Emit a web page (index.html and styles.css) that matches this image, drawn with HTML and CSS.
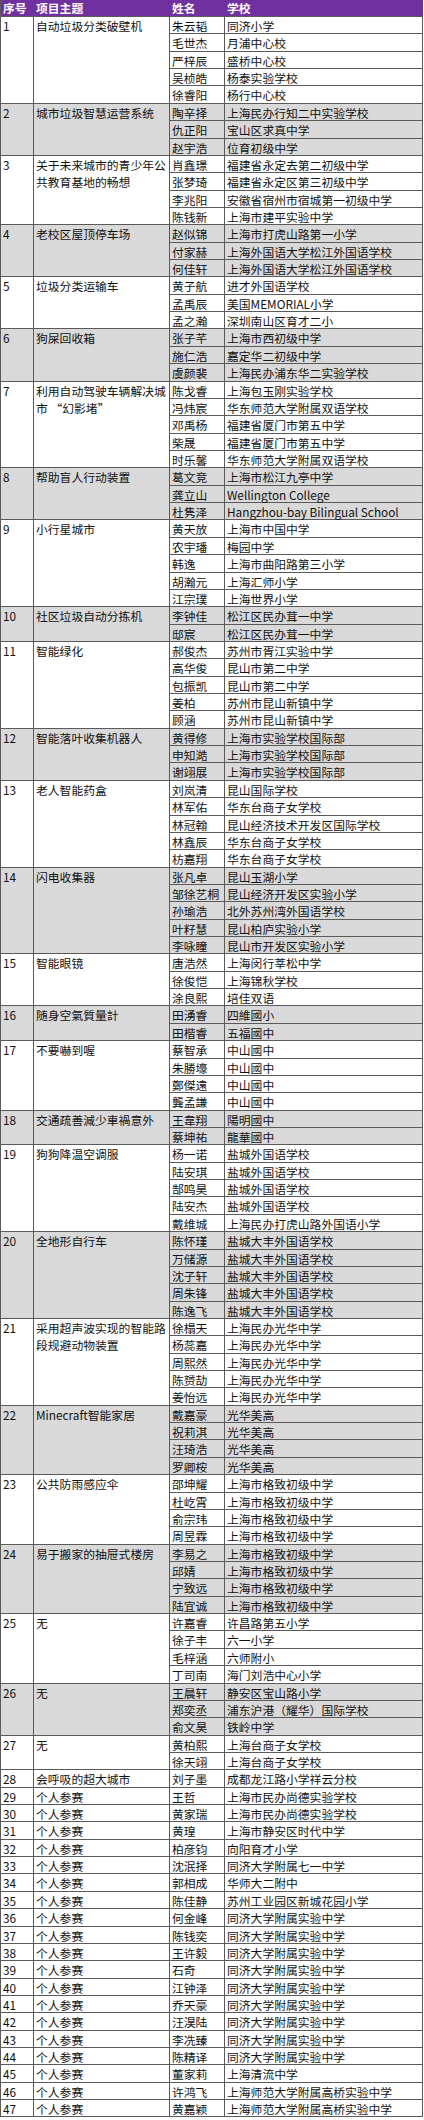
FILE: index.html
```html
<!DOCTYPE html>
<html lang="zh-CN">
<head>
<meta charset="utf-8">
<title>名单</title>
<link rel="stylesheet" href="styles.css">
</head>
<body>
<div class="t">
<div class="hd">序号</div><div class="hd">项目主题</div><div class="hd">姓名</div><div class="hd">学校</div>

<div class="grp">
<div class="no s5">1</div><div class="tp s5">自动垃圾分类破壁机</div>
<div>朱云韬</div><div>同济小学</div>
<div>毛世杰</div><div>月浦中心校</div>
<div>严梓辰</div><div>盛桥中心校</div>
<div>吴桢皓</div><div>杨泰实验学校</div>
<div>徐睿阳</div><div>杨行中心校</div>
</div>

<div class="grp g">
<div class="no s3">2</div><div class="tp s3">城市垃圾智慧运营系统</div>
<div>陶辛择</div><div>上海民办行知二中实验学校</div>
<div>仇正阳</div><div>宝山区求真中学</div>
<div>赵宇浩</div><div>位育初级中学</div>
</div>

<div class="grp">
<div class="no s4">3</div><div class="tp s4">关于未来城市的青少年公<br>共教育基地的畅想</div>
<div>肖鑫璟</div><div>福建省永定去第二初级中学</div>
<div>张梦琦</div><div>福建省永定区第三初级中学</div>
<div>李兆阳</div><div>安徽省宿州市宿城第一初级中学</div>
<div>陈钱新</div><div>上海市建平实验中学</div>
</div>

<div class="grp g">
<div class="no s3">4</div><div class="tp s3">老校区屋顶停车场</div>
<div>赵似锦</div><div>上海市打虎山路第一小学</div>
<div>付家赫</div><div>上海外国语大学松江外国语学校</div>
<div>何佳轩</div><div>上海外国语大学松江外国语学校</div>
</div>

<div class="grp">
<div class="no s3">5</div><div class="tp s3">垃圾分类运输车</div>
<div>黄子航</div><div>进才外国语学校</div>
<div>孟禹辰</div><div>美国MEMORIAL小学</div>
<div>孟之瀚</div><div>深圳南山区育才二小</div>
</div>

<div class="grp g">
<div class="no s3">6</div><div class="tp s3">狗屎回收箱</div>
<div>张子芊</div><div>上海市西初级中学</div>
<div>施仁浩</div><div>嘉定华二初级中学</div>
<div>虞颜裴</div><div>上海民办浦东华二实验学校</div>
</div>

<div class="grp">
<div class="no s5">7</div><div class="tp s5">利用自动驾驶车辆解决城<br>市 “幻影堵”</div>
<div>陈戈睿</div><div>上海包玉刚实验学校</div>
<div>冯炜宸</div><div>华东师范大学附属双语学校</div>
<div>邓禹杨</div><div>福建省厦门市第五中学</div>
<div>柴晟</div><div>福建省厦门市第五中学</div>
<div>时乐馨</div><div>华东师范大学附属双语学校</div>
</div>

<div class="grp g">
<div class="no s3">8</div><div class="tp s3">帮助盲人行动装置</div>
<div>葛文竞</div><div>上海市松江九亭中学</div>
<div>龚立山</div><div>Wellington College</div>
<div>杜隽泽</div><div>Hangzhou-bay Bilingual School</div>
</div>

<div class="grp">
<div class="no s5">9</div><div class="tp s5">小行星城市</div>
<div>黄天放</div><div>上海市中国中学</div>
<div>农宇璠</div><div>梅园中学</div>
<div>韩逸</div><div>上海市曲阳路第三小学</div>
<div>胡瀚元</div><div>上海汇师小学</div>
<div>江宗璞</div><div>上海世界小学</div>
</div>

<div class="grp g">
<div class="no s2">10</div><div class="tp s2">社区垃圾自动分拣机</div>
<div>李钟佳</div><div>松江区民办茸一中学</div>
<div>邸宸</div><div>松江区民办茸一中学</div>
</div>

<div class="grp">
<div class="no s5">11</div><div class="tp s5">智能绿化</div>
<div>郝俊杰</div><div>苏州市胥江实验中学</div>
<div>高华俊</div><div>昆山市第二中学</div>
<div>包振凯</div><div>昆山市第二中学</div>
<div>姜柏</div><div>苏州市昆山新镇中学</div>
<div>顾涵</div><div>苏州市昆山新镇中学</div>
</div>

<div class="grp g">
<div class="no s3">12</div><div class="tp s3">智能落叶收集机器人</div>
<div>黄得修</div><div>上海市实验学校国际部</div>
<div>申知澔</div><div>上海市实验学校国际部</div>
<div>谢翊展</div><div>上海市实验学校国际部</div>
</div>

<div class="grp">
<div class="no s5">13</div><div class="tp s5">老人智能药盒</div>
<div>刘岚清</div><div>昆山国际学校</div>
<div>林军佑</div><div>华东台商子女学校</div>
<div>林冠翰</div><div>昆山经济技术开发区国际学校</div>
<div>林鑫辰</div><div>华东台商子女学校</div>
<div>枋嘉翔</div><div>华东台商子女学校</div>
</div>

<div class="grp g">
<div class="no s5">14</div><div class="tp s5">闪电收集器</div>
<div>张凡卓</div><div>昆山玉湖小学</div>
<div>邹徐艺桐</div><div>昆山经济开发区实验小学</div>
<div>孙瑜浩</div><div>北外苏州湾外国语学校</div>
<div>叶籽慧</div><div>昆山柏庐实验小学</div>
<div>李咏瞳</div><div>昆山市开发区实验小学</div>
</div>

<div class="grp">
<div class="no s3">15</div><div class="tp s3">智能眼镜</div>
<div>唐浩然</div><div>上海闵行莘松中学</div>
<div>徐俊恺</div><div>上海锦秋学校</div>
<div>涂良熙</div><div>培佳双语</div>
</div>

<div class="grp g">
<div class="no s2">16</div><div class="tp s2">随身空氣質量計</div>
<div>田湧睿</div><div>四維國小</div>
<div>田楷睿</div><div>五福國中</div>
</div>

<div class="grp">
<div class="no s4">17</div><div class="tp s4">不要嚇到喔</div>
<div>蔡智承</div><div>中山國中</div>
<div>朱勝壕</div><div>中山國中</div>
<div>鄭傑遠</div><div>中山國中</div>
<div>龔孟謙</div><div>中山國中</div>
</div>

<div class="grp g">
<div class="no s2">18</div><div class="tp s2">交通疏善減少車禍意外</div>
<div>王韋翔</div><div>陽明國中</div>
<div>蔡坤祐</div><div>龍華國中</div>
</div>

<div class="grp">
<div class="no s5">19</div><div class="tp s5">狗狗降温空调服</div>
<div>杨一诺</div><div>盐城外国语学校</div>
<div>陆安琪</div><div>盐城外国语学校</div>
<div>郜鸣昊</div><div>盐城外国语学校</div>
<div>陆安杰</div><div>盐城外国语学校</div>
<div>戴维城</div><div>上海民办打虎山路外国语小学</div>
</div>

<div class="grp g">
<div class="no s5">20</div><div class="tp s5">全地形自行车</div>
<div>陈怀瑾</div><div>盐城大丰外国语学校</div>
<div>万储源</div><div>盐城大丰外国语学校</div>
<div>沈子轩</div><div>盐城大丰外国语学校</div>
<div>周朱锋</div><div>盐城大丰外国语学校</div>
<div>陈逸飞</div><div>盐城大丰外国语学校</div>
</div>

<div class="grp">
<div class="no s5">21</div><div class="tp s5">采用超声波实现的智能路<br>段规避动物装置</div>
<div>徐榻天</div><div>上海民办光华中学</div>
<div>杨蕊嘉</div><div>上海民办光华中学</div>
<div>周熙然</div><div>上海民办光华中学</div>
<div>陈赟劼</div><div>上海民办光华中学</div>
<div>姜怡远</div><div>上海民办光华中学</div>
</div>

<div class="grp g">
<div class="no s4">22</div><div class="tp s4">Minecraft智能家居</div>
<div>戴嘉豪</div><div>光华美高</div>
<div>祝莉淇</div><div>光华美高</div>
<div>汪琦浩</div><div>光华美高</div>
<div>罗卿桉</div><div>光华美高</div>
</div>

<div class="grp">
<div class="no s4">23</div><div class="tp s4">公共防雨感应伞</div>
<div>邵坤耀</div><div>上海市格致初级中学</div>
<div>杜屹霄</div><div>上海市格致初级中学</div>
<div>俞宗玮</div><div>上海市格致初级中学</div>
<div>周昱霖</div><div>上海市格致初级中学</div>
</div>

<div class="grp g">
<div class="no s4">24</div><div class="tp s4">易于搬家的抽屉式楼房</div>
<div>李易之</div><div>上海市格致初级中学</div>
<div>邱婧</div><div>上海市格致初级中学</div>
<div>宁致远</div><div>上海市格致初级中学</div>
<div>陆宜诚</div><div>上海市格致初级中学</div>
</div>

<div class="grp">
<div class="no s4">25</div><div class="tp s4">无</div>
<div>许嘉睿</div><div>许昌路第五小学</div>
<div>徐子丰</div><div>六一小学</div>
<div>毛梓涵</div><div>六师附小</div>
<div>丁司南</div><div>海门刘浩中心小学</div>
</div>

<div class="grp g">
<div class="no s3">26</div><div class="tp s3">无</div>
<div>王晨轩</div><div>静安区宝山路小学</div>
<div>郑奕丞</div><div>浦东沪港（耀华）国际学校</div>
<div>俞文昊</div><div>铁岭中学</div>
</div>

<div class="grp">
<div class="no s2">27</div><div class="tp s2">无</div>
<div>黄柏熙</div><div>上海台商子女学校</div>
<div>徐天翊</div><div>上海台商子女学校</div>
</div>

<div class="grp">
<div class="no">28</div><div class="tp">会呼吸的超大城市</div><div>刘子墨</div><div>成都龙江路小学祥云分校</div>
<div class="no">29</div><div class="tp">个人参赛</div><div>王哲</div><div>上海市民办尚德实验学校</div>
<div class="no">30</div><div class="tp">个人参赛</div><div>黄家瑞</div><div>上海市民办尚德实验学校</div>
<div class="no">31</div><div class="tp">个人参赛</div><div>黄瑝</div><div>上海市静安区时代中学</div>
<div class="no">32</div><div class="tp">个人参赛</div><div>柏彦钧</div><div>向阳育才小学</div>
<div class="no">33</div><div class="tp">个人参赛</div><div>沈泯择</div><div>同济大学附属七一中学</div>
<div class="no">34</div><div class="tp">个人参赛</div><div>郭相成</div><div>华师大二附中</div>
<div class="no">35</div><div class="tp">个人参赛</div><div>陈佳静</div><div>苏州工业园区新城花园小学</div>
<div class="no">36</div><div class="tp">个人参赛</div><div>何金峰</div><div>同济大学附属实验中学</div>
<div class="no">37</div><div class="tp">个人参赛</div><div>陈钱奕</div><div>同济大学附属实验中学</div>
<div class="no">38</div><div class="tp">个人参赛</div><div>王许毅</div><div>同济大学附属实验中学</div>
<div class="no">39</div><div class="tp">个人参赛</div><div>石奇</div><div>同济大学附属实验中学</div>
<div class="no">40</div><div class="tp">个人参赛</div><div>江钟泽</div><div>同济大学附属实验中学</div>
<div class="no">41</div><div class="tp">个人参赛</div><div>乔天豪</div><div>同济大学附属实验中学</div>
<div class="no">42</div><div class="tp">个人参赛</div><div>汪淏陆</div><div>同济大学附属实验中学</div>
<div class="no">43</div><div class="tp">个人参赛</div><div>李冼臻</div><div>同济大学附属实验中学</div>
<div class="no">44</div><div class="tp">个人参赛</div><div>陈精译</div><div>同济大学附属实验中学</div>
<div class="no">45</div><div class="tp">个人参赛</div><div>董家莉</div><div>上海清流中学</div>
<div class="no">46</div><div class="tp">个人参赛</div><div>许鸿飞</div><div>上海师范大学附属高桥实验中学</div>
<div class="no">47</div><div class="tp">个人参赛</div><div>黄嘉颖</div><div>上海师范大学附属高桥实验中学</div>
</div>
</div>
</body>
</html>
```

FILE: styles.css
```css
html, body {
  margin: 0;
  padding: 0;
  background: #ffffff;
}

.t {
  display: grid;
  grid-template-columns: 33px 136px 55px 198px;
  grid-template-rows: 17px repeat(121, 17.37px);
  width: 423px;
  border-left: 1px solid #5a5a5a;
  font-family: "Noto Sans CJK SC", sans-serif;
  font-size: 11.8px;
  line-height: 16px;
  color: #111111;
}

.grp {
  display: contents;
}

.t > div,
.grp > div {
  box-sizing: border-box;
  border-right: 1px solid #5a5a5a;
  border-bottom: 1px solid #5a5a5a;
  padding: 1px 0 0 2px;
  white-space: nowrap;
  min-width: 0;
  min-height: 0;
}

.t > .hd {
  background: #7030a0;
  color: #ffffff;
  font-weight: bold;
  padding-top: 0;
  border-right-color: #7030a0;
}

.grp > .tp {
  white-space: normal;
  line-height: 17.37px;
  padding-top: 0;
}

.g > div {
  background: #d9d9d9;
}

.s2 { grid-row: span 2; }
.s3 { grid-row: span 3; }
.s4 { grid-row: span 4; }
.s5 { grid-row: span 5; }
```
